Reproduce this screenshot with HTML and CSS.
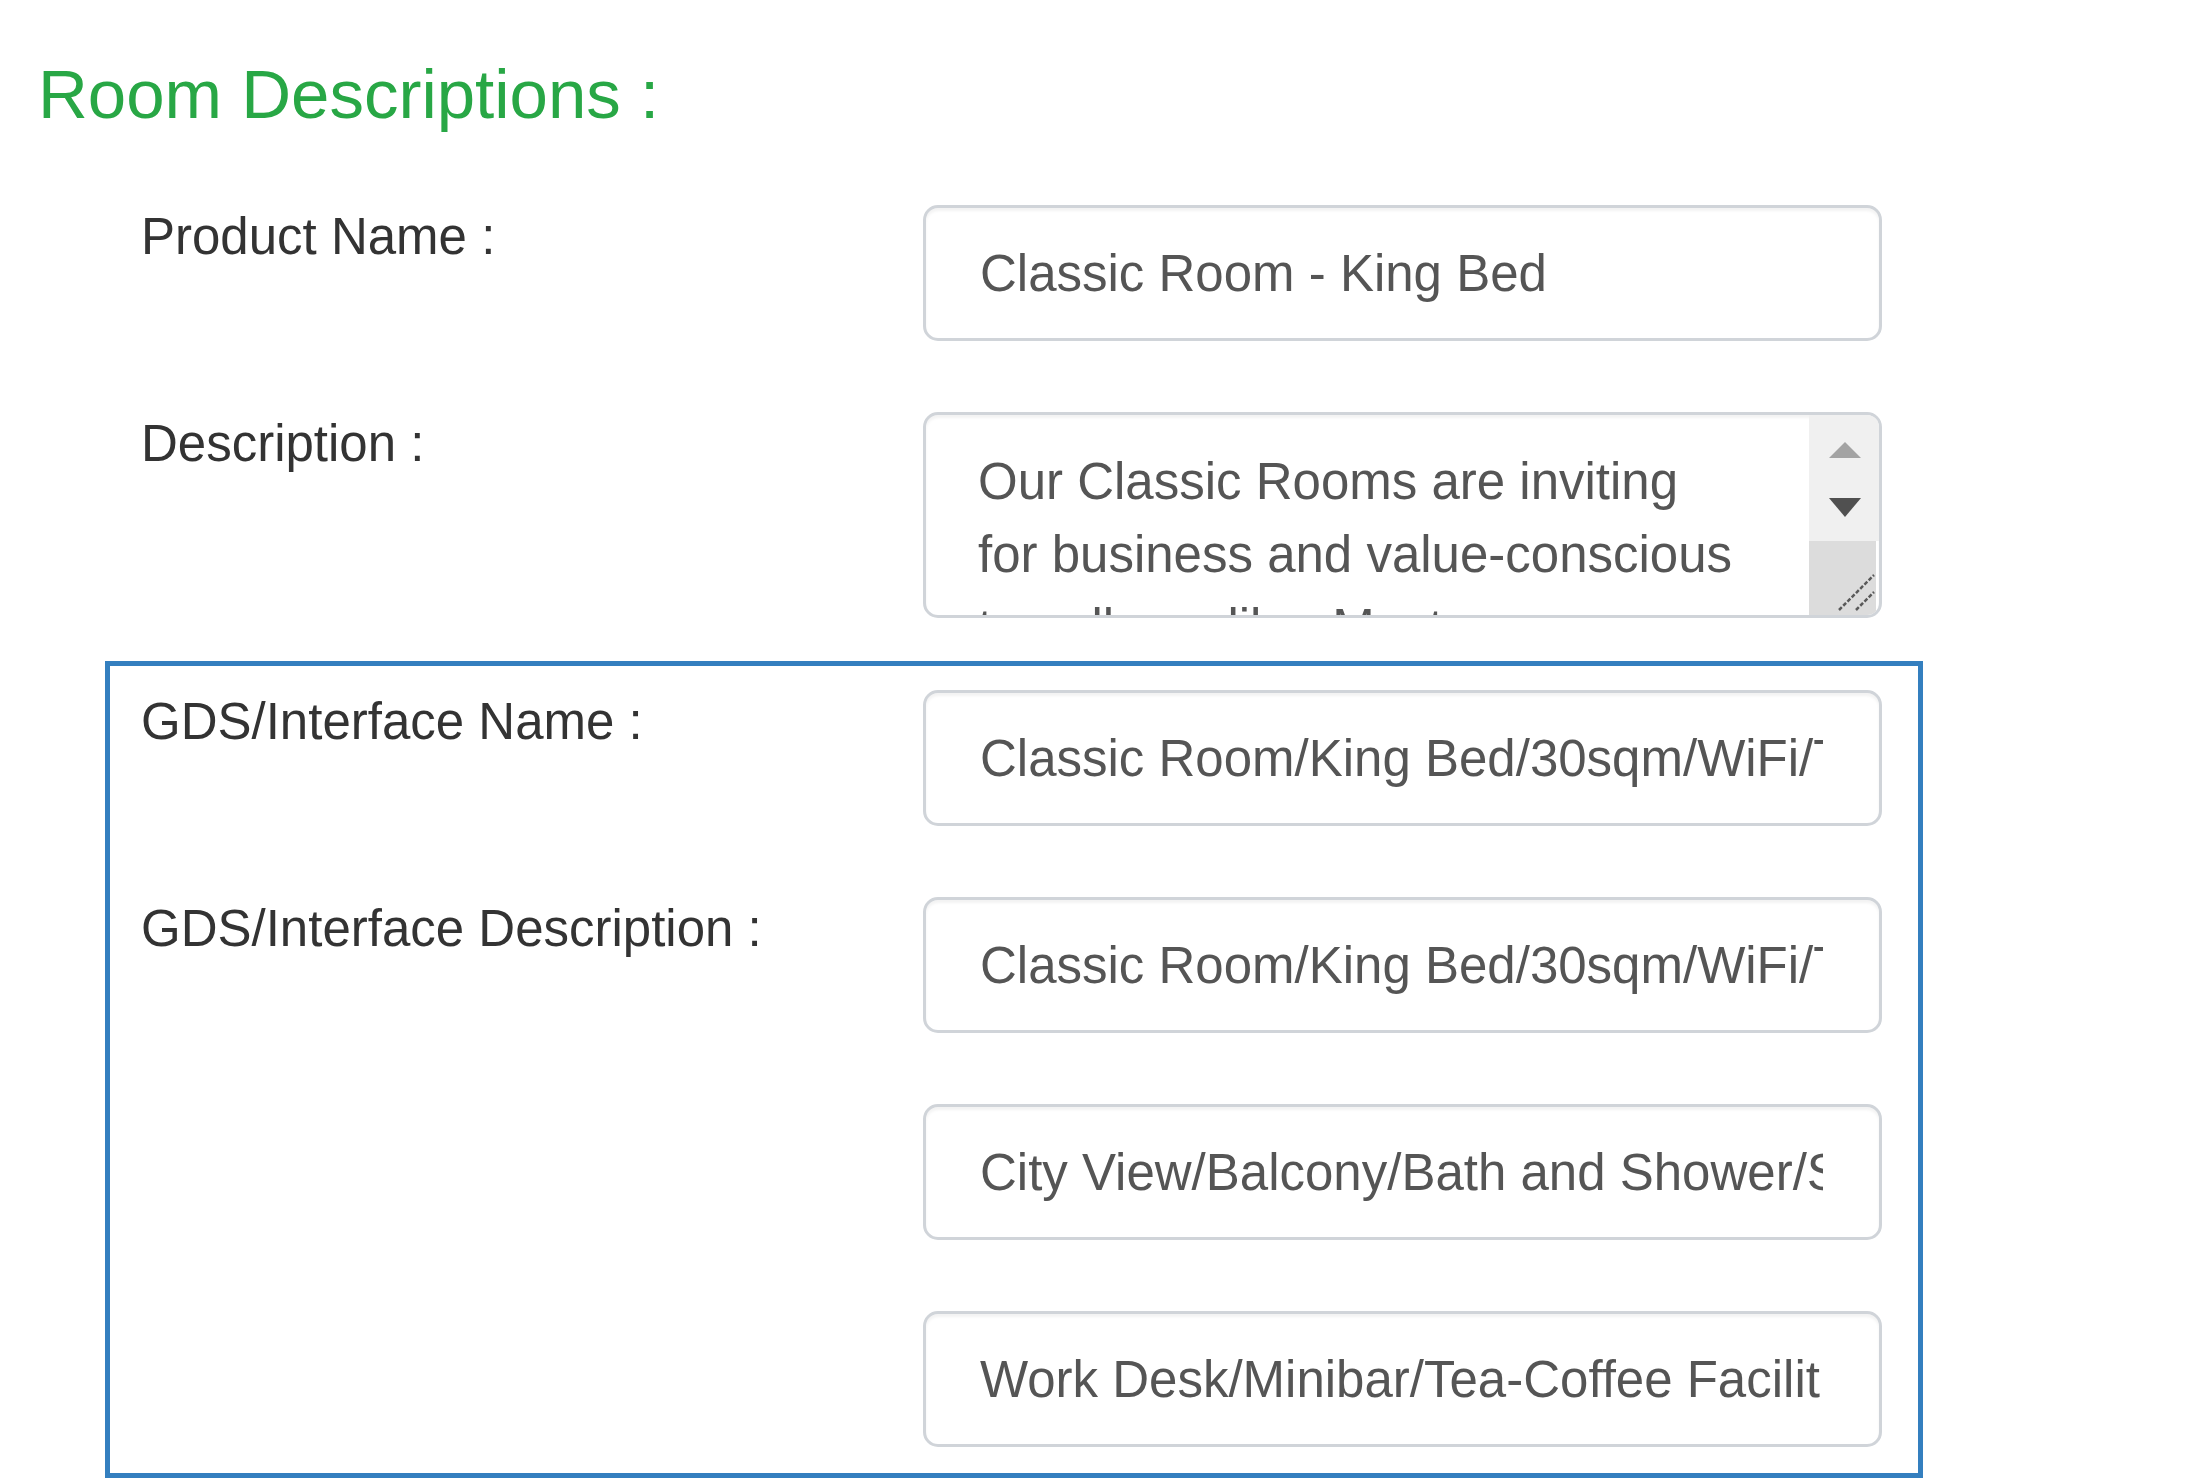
FILE: index.html
```html
<!DOCTYPE html>
<html lang="en">
<head>
<meta charset="utf-8">
<title>Room Descriptions</title>
<link rel="stylesheet" href="styles.css">
</head>
<body>
<div class="form">
  <h2 class="section-title">Room Descriptions :</h2>

  <div class="group">
    <div class="row">
      <label class="label" for="pname">Product Name :</label>
      <input class="field" id="pname" type="text" value="Classic Room - King Bed" readonly>
    </div>
    <div class="row">
      <label class="label">Description :</label>
      <div class="textarea">
        <div class="ta-text">Our Classic Rooms are inviting<br>for business and value-conscious<br>travellers alike. Most<br>rooms offer city views.</div>
        <div class="ta-scroll">
          <svg width="70" height="200" viewBox="0 0 70 200">
            <rect x="0" y="0" width="70" height="126" fill="#f0f0f0"/>
            <polygon points="20,43 52,43 36,27" fill="#a3a3a3"/>
            <polygon points="20,83 52,83 36,102" fill="#505050"/>
            <rect x="-4" y="126" width="71" height="74" fill="#dcdcdc"/>
            <line x1="30" y1="195" x2="65" y2="160" stroke="#5a5a5a" stroke-width="2.5" stroke-dasharray="4 2"/>
            <line x1="47" y1="195" x2="65" y2="177" stroke="#5a5a5a" stroke-width="2.5" stroke-dasharray="4 2"/>
          </svg>
        </div>
      </div>
    </div>
  </div>

  <div class="group gds">
    <div class="row">
      <label class="label" for="gname">GDS/Interface Name :</label>
      <input class="field" id="gname" type="text" value="Classic Room/King Bed/30sqm/WiFi/TV/Air Conditioning" readonly>
    </div>
    <div class="row">
      <label class="label">GDS/Interface Description :</label>
      <div class="stack">
        <input class="field" type="text" value="Classic Room/King Bed/30sqm/WiFi/TV/Air Conditioning" readonly>
        <input class="field" type="text" value="City View/Balcony/Bath and Shower/Safe" readonly>
        <input class="field" type="text" value="Work Desk/Minibar/Tea-Coffee Facilities" readonly>
      </div>
    </div>
  </div>
</div>
</body>
</html>
```

FILE: styles.css
```css
html, body {
  margin: 0;
  padding: 0;
  overflow: hidden;
  background: #ffffff;
}

body {
  font-family: "Liberation Sans", Arial, sans-serif;
  color: #333333;
}

.form {
  display: flex;
  flex-direction: column;
}

.section-title {
  margin: 0;
  padding: 55px 0 0 38px;
  font-size: 69px;
  line-height: 79px;
  font-weight: normal;
  color: #28a745;
}

.group {
  display: flex;
  flex-direction: column;
  gap: 71px;
  margin-top: 71px;
  padding-left: 141px;
}

.row {
  display: grid;
  grid-template-columns: 782px 959px;
  align-items: start;
}

.label {
  font-size: 51px;
  line-height: 64px;
  color: #333333;
}

.field {
  box-sizing: border-box;
  width: 959px;
  height: 136px;
  margin: 0;
  padding: 0 56px 0 54px;
  font-family: "Liberation Sans", Arial, sans-serif;
  font-size: 51px;
  color: #555555;
  background: #ffffff;
  border: 3px solid #d0d4d9;
  border-radius: 15px;
  box-shadow: inset 0 3px 3px rgba(0, 0, 0, 0.05);
  outline: none;
}

.textarea {
  box-sizing: border-box;
  width: 959px;
  height: 206px;
  display: flex;
  border: 3px solid #d0d4d9;
  border-radius: 15px;
  box-shadow: inset 0 3px 3px rgba(0, 0, 0, 0.05);
  overflow: hidden;
  background: #ffffff;
}

.ta-text {
  flex: 1;
  padding: 30px 20px 0 52px;
  font-size: 51px;
  line-height: 73px;
  color: #555555;
  white-space: nowrap;
  overflow: hidden;
}

.ta-scroll {
  width: 70px;
  flex: none;
  display: flex;
}

.ta-scroll svg {
  display: block;
}

.gds {
  margin-top: 43px;
  margin-left: 105px;
  width: 1818px;
  box-sizing: border-box;
  padding: 24px 36px 26px 31px;
  border: 5px solid #347fbf;
}

.stack {
  display: flex;
  flex-direction: column;
  gap: 71px;
}
```
